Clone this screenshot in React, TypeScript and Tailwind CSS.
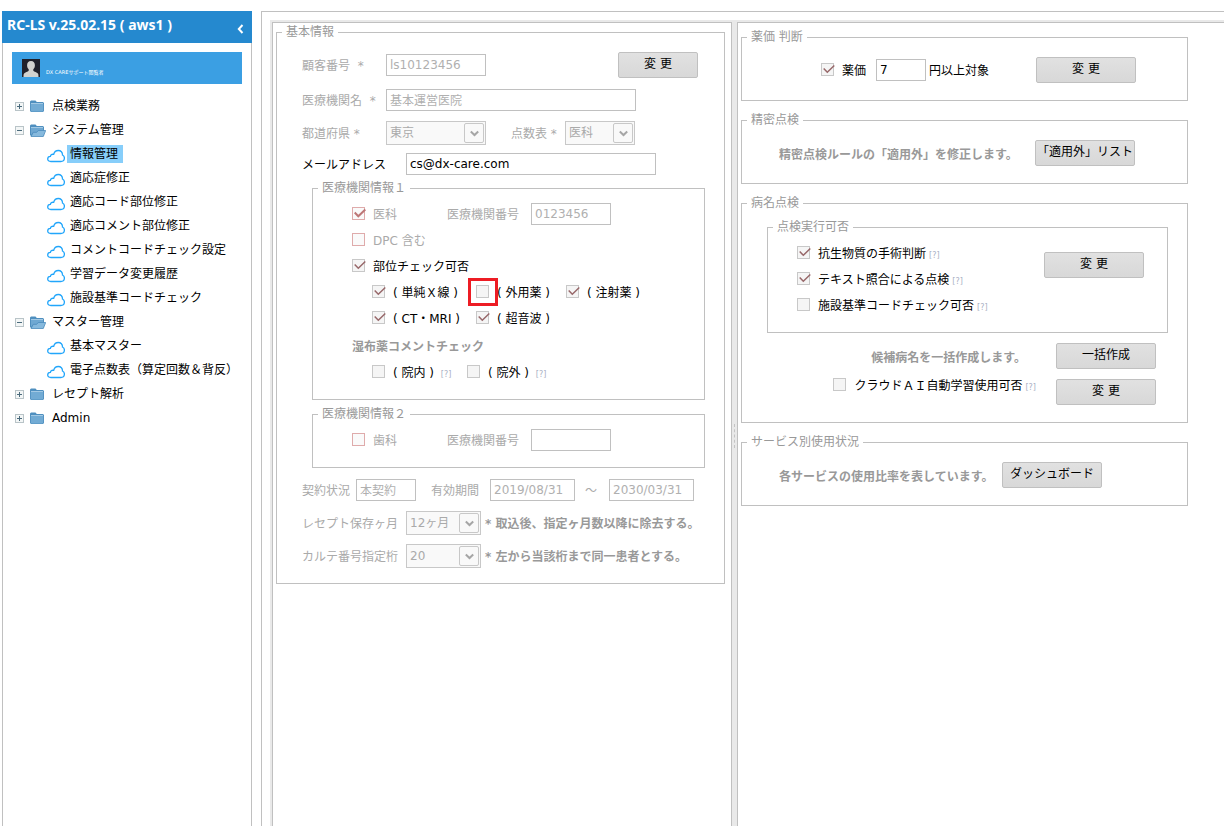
import type { ReactNode } from "react";
import { useId, useState } from "react";

type TreeNode = {
  label: string;
  open?: boolean;
  children?: string[];
};

const tree: TreeNode[] = [
  { label: "点検業務" },
  {
    label: "システム管理",
    open: true,
    children: [
      "情報管理",
      "適応症修正",
      "適応コード部位修正",
      "適応コメント部位修正",
      "コメントコードチェック設定",
      "学習データ変更履歴",
      "施設基準コードチェック",
    ],
  },
  {
    label: "マスター管理",
    open: true,
    children: ["基本マスター", "電子点数表（算定回数＆背反）"],
  },
  { label: "レセプト解析" },
  { label: "Admin" },
];

function ToggleIcon({ open }: { open?: boolean }) {
  return (
    <svg width="9" height="9" viewBox="0 0 9 9" shapeRendering="crispEdges" className="shrink-0">
      <rect x="0.5" y="0.5" width="8" height="8" fill="#f3f6f6" stroke="#b9c4c8" />
      <path d={open ? "M2 4.5h5" : "M2 4.5h5M4.5 2v5"} stroke="#4a6a7c" />
    </svg>
  );
}

function FolderIcon({ open }: { open?: boolean }) {
  return (
    <svg width="16" height="13" viewBox="0 0 16 13" className="shrink-0">
      <path d="M0 11V1.500L1 .5h4.500L6.800 2H13l1 1v8l-1 1H1z" fill="#4f8fbf" />
      <path d="M1 3.500h12" stroke="#a3c9e4" />
      {open ? (
        <>
          <path d="M1 4h12v3H8L6.500 8.500H3L1 11z" fill="#6fa8d2" />
          <path d="M1 12.500 3.300 8.300h3.400L8.200 6.500h7.500l-2.400 6z" fill="#86b9dd" stroke="#4b8cbd" strokeWidth=".8" />
        </>
      ) : (
        <path d="M.8 4h12.400v6.700l-.7.7h-11l-.7-.7z" fill="#72abd4" />
      )}
    </svg>
  );
}

function CloudIcon() {
  return (
    <svg width="18" height="14" viewBox="0 0 18 14" fill="none" className="shrink-0">
      <path
        d="M3.800 12.500C1.900 12.500.7 11.500.7 10S1.800 7.300 3.400 7.300C3.600 5.700 4.800 5 6.700 5.300 7.300 2.900 9 1.500 11.300 1.500c2.600 0 4.300 1.700 4.200 4.500 1.200.6 1.900 1.700 1.900 3 0 2-1.400 3.500-3.600 3.500z"
        stroke="#22a6fb"
        strokeWidth="1.300"
      />
    </svg>
  );
}

function Sidebar() {
  const [selected, setSelected] = useState("情報管理");

  return (
    <aside className="w-[250px] shrink-0 border-x border-[#c0c0c0]">
      <div className="-mx-px h-8 bg-[#2589cf] text-white flex items-center justify-between pl-[5px] pr-2">
        <h1 className="font-['Noto_Sans'] text-sm leading-4 font-bold pb-1">RC-LS v.25.02.15 ( aws1 )</h1>
        <button type="button" aria-label="メニューを閉じる" className="pt-1">
          <svg width="7" height="10" viewBox="0 0 7 10" fill="none">
            <path d="M5.500 1 1.800 5l3.700 4" stroke="white" strokeWidth="2" />
          </svg>
        </button>
      </div>

      <div className="mx-[9px] mt-[9px] h-8 bg-[#3b9fe3] flex items-center gap-1.5 pl-2.5">
        <svg width="18" height="18" viewBox="0 0 18 18" className="shrink-0">
          <rect width="18" height="18" fill="#20202a" />
          <path
            d="M9 2c2.600 0 3.900 1.700 3.900 4.200 0 1.900-.6 3.200-1.600 4.100v1.500c.8 1 3.700 1.500 4.600 2.700.5.6.6 1.700.6 3.500h-15c0-1.800.1-2.900.6-3.500.9-1.200 3.800-1.700 4.600-2.700v-1.500C5.700 9.400 5.100 8.100 5.100 6.200 5.100 3.700 6.400 2 9 2z"
            fill="#d2d2cf"
          />
        </svg>
        <span className="text-[5px] leading-[6px] pt-2 text-white whitespace-nowrap">DX CAREサポート閲覧者</span>
      </div>

      <nav className="mt-2.5">
        <ul>
          {tree.map((node) => (
            <li key={node.label}>
              <button type="button" className="h-6 pl-3 flex items-center">
                <ToggleIcon open={node.open} />
                <span className="w-[22px] ml-1.5 flex">
                  <FolderIcon open={node.open} />
                </span>
                {node.label}
              </button>
              {node.children && (
                <ul>
                  {node.children.map((child) => (
                    <li key={child} className="h-6 pl-11 flex items-center gap-0.5">
                      <span className="pt-[3px]">
                        <CloudIcon />
                      </span>
                      <a
                        href="#"
                        onClick={() => setSelected(child)}
                        className={`leading-[18px] pl-[3px] pr-[5px] whitespace-nowrap ${
                          selected === child ? "bg-[#87cefa]" : ""
                        }`}
                      >
                        {child}
                      </a>
                    </li>
                  ))}
                </ul>
              )}
            </li>
          ))}
        </ul>
      </nav>
    </aside>
  );
}

function Group({ title, className = "", children }: { title: string; className?: string; children: ReactNode }) {
  return (
    <fieldset className={`border border-[#c0c0c0] px-[5px] ${className}`}>
      <legend className="px-1 leading-[17px] text-[#999]">{title}</legend>
      {children}
    </fieldset>
  );
}

function Button({ className = "w-[100px]", children }: { className?: string; children: ReactNode }) {
  return (
    <button
      type="button"
      className={`h-[26px] shrink-0 pb-0.5 border border-[#c0c0c0] rounded-xs bg-linear-to-b from-[#e1e1e1] to-[#d8d8d8] whitespace-nowrap ${className}`}
    >
      {children}
    </button>
  );
}

type FieldProps = {
  label: ReactNode;
  value: string;
  labelClass?: string;
  className: string;
  active?: boolean;
};

function Field({ label, value, labelClass = "", className, active }: FieldProps) {
  const id = useId();
  return (
    <>
      <label htmlFor={id} className={`shrink-0 pt-0.5 whitespace-pre ${active ? "text-black" : "text-[#aaa]"} ${labelClass}`}>
        {label}
      </label>
      <input
        id={id}
        type="text"
        defaultValue={value}
        disabled={!active}
        className={`h-[22px] shrink-0 border border-[#c0c0c0] bg-white px-[3px] pb-px ${
          active ? "text-black" : "text-[#b0b0b0]"
        } ${className}`}
      />
    </>
  );
}

function SelectField({ label, value, labelClass = "", className }: FieldProps) {
  const id = useId();
  return (
    <>
      <label htmlFor={id} className={`shrink-0 pt-0.5 whitespace-pre text-[#aaa] ${labelClass}`}>
        {label}
      </label>
      <div className={`relative h-6 shrink-0 ${className}`}>
        <select
          id={id}
          disabled
          defaultValue={value}
          className="appearance-none size-full border border-[#c8c8c8] bg-[#f9f9f9] px-[3px] text-[#aaa] opacity-100"
        >
          <option>{value}</option>
        </select>
        <span className="absolute right-0.5 top-0.5 size-5 rounded-xs border border-[#c8c8c8] bg-[#f9f9f9] flex items-center justify-center pointer-events-none">
          <svg width="9" height="7" viewBox="0 0 9 7" fill="none">
            <path d="M.8 1.500 4.500 5l3.700-3.500" stroke="#a6a6a6" strokeWidth="2" />
          </svg>
        </span>
      </div>
    </>
  );
}

type CheckProps = {
  label: string;
  checked?: boolean;
  disabled?: boolean;
  marked?: boolean;
  help?: boolean;
  className?: string;
};

function Check({ label, checked, disabled, marked, help, className = "" }: CheckProps) {
  return (
    <label className={`shrink-0 pb-px flex items-center gap-2 whitespace-pre ${className}`}>
      <span className="relative size-[13px] shrink-0">
        <input
          type="checkbox"
          defaultChecked={checked}
          disabled={disabled}
          className={`peer appearance-none block size-[13px] border ${
            disabled ? "border-[#dfabab] bg-[#fafafa]" : "border-[#c8c8c8] bg-[#f5f5f5]"
          }`}
        />
        <svg
          width="13"
          height="11"
          viewBox="0 0 13 11"
          fill="none"
          className={`absolute left-0.5 top-px hidden peer-checked:block pointer-events-none ${
            disabled ? "text-[#bd7777]" : "text-[#98686a]"
          }`}
        >
          <path d="M.7 4.500 4.300 8.300 11.300 1.500" stroke="currentColor" strokeWidth={disabled ? 2 : 1.5} />
        </svg>
        {marked && <span className="absolute -left-2 -top-[7px] w-[30px] h-7 border-3 border-[#ed1c24]" />}
      </span>
      <span className={`pt-[3px] ${disabled ? "text-[#aaa]" : ""}`}>
        {label}
        {help && <span className="ml-[3px] text-[8px] text-[#a9b0c4]">[?]</span>}
      </span>
    </label>
  );
}

function BasicInfo() {
  return (
    <Group title="基本情報" className="pb-[15px]">
      <div className="pl-5">
        <div className="mt-[11px] h-[26px] flex items-center pr-[21px]">
          <Field label="顧客番号  *" labelClass="w-[84px]" value="ls10123456" className="w-[100px]" />
          <Button className="w-20 ml-auto">変 更</Button>
        </div>
        <div className="mt-[11px] flex items-center">
          <Field label="医療機関名  *" labelClass="w-[84px]" value="基本運営医院" className="w-[250px]" />
        </div>
        <div className="mt-2.5 flex items-center">
          <SelectField label="都道府県 *" labelClass="w-[84px]" value="東京" className="w-[100px]" />
          <SelectField label="点数表 *" labelClass="ml-[25px] w-[54px]" value="医科" className="w-[70px]" />
        </div>
        <div className="mt-2 flex items-center">
          <Field label="メールアドレス" labelClass="w-[104px]" value="cs@dx-care.com" className="w-[250px]" active />
        </div>

        <Group title="医療機関情報１" className="mt-[5px] ml-2.5 mr-3.5 pb-4">
          <div className="pl-[34px]">
            <div className="mt-1.5 mb-0.5 flex items-center">
              <Check label="医科" checked disabled className="w-[95px]" />
              <Field label="医療機関番号" labelClass="w-[84px]" value="0123456" className="w-20" />
            </div>
            <div className="h-[26px] flex items-center">
              <Check label="DPC 含む" disabled />
            </div>
            <div className="h-[26px] flex items-center">
              <Check label="部位チェック可否" checked />
            </div>
            <div className="h-[26px] pl-5 flex items-center">
              <Check label="( 単純Ｘ線 )" checked className="w-[104px]" />
              <Check label="( 外用薬 )" marked className="w-[90px]" />
              <Check label="( 注射薬 )" checked />
            </div>
            <div className="h-[26px] pl-5 flex items-center">
              <Check label="( CT・MRI )" checked className="w-[104px]" />
              <Check label="( 超音波 )" checked />
            </div>
            <div className="h-[30px] pt-0.5 flex items-center font-bold text-[#999]">湿布薬コメントチェック</div>
            <div className="h-[22px] pl-5 flex items-center">
              <Check label="( 院内 ) " help className="w-[95px]" />
              <Check label="( 院外 ) " help />
            </div>
          </div>
        </Group>

        <Group title="医療機関情報２" className="mt-1.5 ml-2.5 mr-3.5 pb-4">
          <div className="pl-[34px] mt-1.5 flex items-center">
            <Check label="歯科" disabled className="w-[95px]" />
            <Field label="医療機関番号" labelClass="w-[84px]" value="" className="w-20" />
          </div>
        </Group>

        <div className="mt-[11px] flex items-center">
          <Field label="契約状況" labelClass="w-[54px]" value="本契約" className="w-[60px]" />
          <Field label="有効期間" labelClass="ml-[15px] w-[59px]" value="2019/08/31" className="w-[85px]" />
          <Field label="～" labelClass="ml-2.5 w-6" value="2030/03/31" className="w-[85px]" />
        </div>
        <div className="mt-2.5 flex items-center">
          <SelectField label="レセプト保存ヶ月" labelClass="w-[104px]" value="12ヶ月" className="w-[75px]" />
          <p className="ml-1 pt-0.5 font-bold text-[#999] whitespace-nowrap">* 取込後、指定ヶ月数以降に除去する。</p>
        </div>
        <div className="mt-[9px] flex items-center">
          <SelectField label="カルテ番号指定桁" labelClass="w-[104px]" value="20" className="w-[75px]" />
          <p className="ml-1 pt-0.5 font-bold text-[#999] whitespace-nowrap">* 左から当該桁まで同一患者とする。</p>
        </div>
      </div>
    </Group>
  );
}

function CheckSettings() {
  return (
    <div className="flex flex-col gap-[11px]">
      <Group title="薬価 判断" className="pb-[17px]">
        <div className="mt-[11px] pl-[74px] flex items-center">
          <Check label="薬価" checked className="w-[55px]" />
          <input
            type="text"
            aria-label="薬価の下限"
            defaultValue="7"
            className="w-[50px] h-[22px] border border-[#c0c0c0] px-[3px] pb-px"
          />
          <span className="w-[110px] pl-[3px] pt-0.5">円以上対象</span>
          <Button>変 更</Button>
        </div>
      </Group>

      <Group title="精密点検" className="pb-[17px]">
        <div className="mt-[11px] pl-8 flex items-center">
          <p className="w-64 pt-1 font-bold text-[#999] whitespace-nowrap">精密点検ルールの「適用外」を修正します。</p>
          <Button>「適用外」リスト</Button>
        </div>
      </Group>

      <Group title="病名点検" className="pb-[17px]">
        <Group title="点検実行可否" className="mt-[7px] ml-5 mr-3.5 pb-3.5">
          <div className="pt-1 pl-6 pr-[18px] flex justify-between">
            <div>
              <Check label="抗生物質の手術判断" checked help className="h-[26px]" />
              <Check label="テキスト照合による点検" checked help className="h-[26px]" />
              <Check label="施設基準コードチェック可否" help className="h-[26px]" />
            </div>
            <div className="pt-3">
              <Button>変 更</Button>
            </div>
          </div>
        </Group>
        <div className="mt-2.5 pr-[26px] flex items-center justify-end gap-[30px]">
          <p className="pt-1 font-bold text-[#999]">候補病名を一括作成します。</p>
          <Button>一括作成</Button>
        </div>
        <div className="mt-2.5 pr-[26px] flex items-start justify-end gap-5">
          <Check label="クラウドＡＩ自動学習使用可否" help className="h-3" />
          <Button>変 更</Button>
        </div>
      </Group>

      <Group title="サービス別使用状況" className="pb-[17px]">
        <div className="mt-[11px] pl-8 flex items-center">
          <p className="w-[223px] pt-1 font-bold text-[#999] whitespace-nowrap">各サービスの使用比率を表しています。</p>
          <Button>ダッシュボード</Button>
        </div>
      </Group>
    </div>
  );
}

export default function App() {
  return (
    <div className="min-h-screen flex items-stretch overflow-hidden bg-white pt-[11px] pl-0.5 text-xs text-black font-['DejaVu_Sans','Noto_Sans_CJK_JP',sans-serif]">
      <Sidebar />
      <main className="ml-[9px] flex-1 min-w-0 flex border-l border-t border-[#c0c0c0] pl-2 pt-2">
        <div className="flex-1 min-w-0 flex bg-[#e9e9e9] pl-0.5 pt-0.5">
          <section className="w-[460px] shrink-0 bg-white border-x border-t border-[#c0c0c0] pl-[3px] pr-1.5 pt-px">
            <BasicInfo />
          </section>
          <div className="w-[5px] shrink-0 flex items-center justify-center pt-6 cursor-col-resize">
            <span className="h-6 border-l border-dashed border-[#c4c4c4]" />
          </div>
          <section className="flex-1 min-w-0 bg-white border-l border-t border-[#c0c0c0] pl-[3px] pr-9 pt-1.5">
            <CheckSettings />
          </section>
        </div>
      </main>
    </div>
  );
}
